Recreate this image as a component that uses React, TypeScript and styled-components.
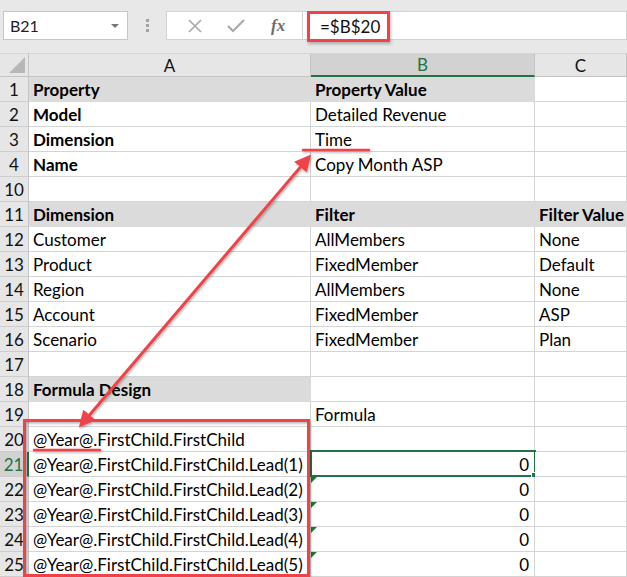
import * as React from 'react'
import styled, { createGlobalStyle } from 'styled-components'

const GRID = '#d4d4d4'
const BAND = '#dbdbdb'
const HEAD = '#e6e6e6'
const GREEN = '#217346'
const RED = '#ef4349'

const GlobalStyle = createGlobalStyle`
  body {
    margin: 0;
    background: #fff;
    font-family: Lato, "Open Sans", sans-serif;
  }
`

const Frame = styled.div`
  position: relative;
  width: 627px;
  height: 577px;
  overflow: hidden;
  background: #fff;
`

const FormulaBar = styled.div`
  height: 53px;
  box-sizing: border-box;
  padding-top: 11px;
  background: #e8e8e8;
  display: flex;
  align-items: flex-start;
`

const NameBox = styled.div`
  margin-left: 3px;
  width: 125px;
  height: 29px;
  box-sizing: border-box;
  background: #fff;
  border: 1px solid #c6c6c6;
  display: flex;
  align-items: center;
  justify-content: space-between;
  padding: 0 8px 0 6px;
  font-size: 16px;
  color: #222;
`

const Caret = styled.span`
  width: 0;
  height: 0;
  border-left: 4px solid transparent;
  border-right: 4px solid transparent;
  border-top: 4px solid #777;
`

const Grip = styled.div`
  width: 38px;
  height: 29px;
  display: flex;
  flex-direction: column;
  align-items: center;
  justify-content: center;
  gap: 2px;
`

const GripDot = styled.span`
  width: 3px;
  height: 3px;
  background: #a3a3a3;
`

const Buttons = styled.div`
  width: 136px;
  height: 29px;
  box-sizing: border-box;
  background: #fff;
  border: 1px solid #d2d2d2;
  border-right: none;
  display: flex;
  align-items: center;
  justify-content: space-around;
  padding: 0 4px 0 8px;
`

const Fx = styled.span`
  font-family: "Liberation Serif", serif;
  font-style: italic;
  font-weight: bold;
  font-size: 17px;
  color: #6e6e6e;
`

const FormulaInput = styled.div`
  flex: 1;
  height: 29px;
  box-sizing: border-box;
  background: #fff;
  border: 1px solid #d2d2d2;
  display: flex;
  align-items: center;
  padding-left: 4px;
`

const Highlight = styled.span`
  display: inline-flex;
  align-items: center;
  height: 31px;
  margin-top: 1px;
  box-sizing: border-box;
  border: 3px solid ${RED};
  box-shadow: 1px 2px 3px rgba(0, 0, 0, 0.25);
  padding: 0 7px 0 10px;
  font-size: 17px;
  color: #111;
`

const Sheet = styled.div`
  display: grid;
  grid-template-columns: 29px 282px 224px 92px;
  grid-auto-rows: 25px;
  grid-template-rows: 24px;
`

const Corner = styled.div`
  position: relative;
  background: ${HEAD};
  border-right: 1px solid #c4c4c4;
  border-bottom: 1px solid #c4c4c4;
  border-top: 1px solid #d6d6d6;
  box-sizing: border-box;
`

const CornerTriangle = styled.span`
  position: absolute;
  right: 3px;
  bottom: 3px;
  width: 0;
  height: 0;
  border-left: 16px solid transparent;
  border-bottom: 16px solid #b7b7b7;
`

const ColHead = styled.div<{ $active?: boolean }>`
  box-sizing: border-box;
  background: ${p => (p.$active ? '#d2d2d2' : HEAD)};
  border-top: 1px solid #d6d6d6;
  border-right: 1px solid #c4c4c4;
  border-bottom: ${p => (p.$active ? `2px solid ${GREEN}` : '1px solid #c4c4c4')};
  color: ${p => (p.$active ? GREEN : '#111')};
  font-size: 17px;
  display: flex;
  align-items: center;
  justify-content: center;
`

const RowHead = styled.div<{ $active?: boolean }>`
  box-sizing: border-box;
  background: ${p => (p.$active ? '#d2d2d2' : HEAD)};
  border-right: ${p => (p.$active ? `2px solid ${GREEN}` : '1px solid #c4c4c4')};
  border-bottom: 1px solid #cdcdcd;
  color: ${p => (p.$active ? GREEN : '#111')};
  font-size: 17px;
  display: flex;
  align-items: center;
  justify-content: center;
  padding-top: 1px;
`

const Cell = styled.div<{ $band?: boolean; $bold?: boolean; $right?: boolean }>`
  position: relative;
  box-sizing: border-box;
  background: ${p => (p.$band ? BAND : '#fff')};
  border-right: 1px solid ${p => (p.$band ? BAND : GRID)};
  border-bottom: 1px solid ${p => (p.$band ? BAND : GRID)};
  font-size: 17px;
  font-weight: ${p => (p.$bold ? 700 : 400)};
  color: #000;
  line-height: 24px;
  padding: 1px 5px 0 4px;
  white-space: nowrap;
  overflow: visible;
  text-align: ${p => (p.$right ? 'right' : 'left')};
`

const Selection = styled.span`
  position: absolute;
  left: -1px;
  top: -2px;
  right: -2px;
  bottom: -1px;
  border: 2px solid ${GREEN};
  pointer-events: none;
`

const FillHandle = styled.span`
  position: absolute;
  right: -4px;
  bottom: -4px;
  width: 5px;
  height: 5px;
  background: ${GREEN};
  border: 1px solid #fff;
`

const Flag = styled.span`
  position: absolute;
  left: 0;
  top: 0;
  width: 0;
  height: 0;
  border-top: 6px solid #1a7a26;
  border-right: 6px solid transparent;
`

const Overlay = styled.svg`
  position: absolute;
  left: 0;
  top: 0;
  pointer-events: none;
`

type Row = {
  n: number
  a?: string
  b?: string
  c?: string
  boldA?: boolean
  boldAll?: boolean
  band?: number
  selected?: boolean
  flag?: boolean
}

const rows: Row[] = [
  { n: 1, a: 'Property', b: 'Property Value', boldAll: true, band: 2 },
  { n: 2, a: 'Model', b: 'Detailed Revenue', boldA: true },
  { n: 3, a: 'Dimension', b: 'Time', boldA: true },
  { n: 4, a: 'Name', b: 'Copy Month ASP', boldA: true },
  { n: 10 },
  { n: 11, a: 'Dimension', b: 'Filter', c: 'Filter Value', boldAll: true, band: 3 },
  { n: 12, a: 'Customer', b: 'AllMembers', c: 'None' },
  { n: 13, a: 'Product', b: 'FixedMember', c: 'Default' },
  { n: 14, a: 'Region', b: 'AllMembers', c: 'None' },
  { n: 15, a: 'Account', b: 'FixedMember', c: 'ASP' },
  { n: 16, a: 'Scenario', b: 'FixedMember', c: 'Plan' },
  { n: 17 },
  { n: 18, a: 'Formula Design', boldAll: true, band: 1 },
  { n: 19, b: 'Formula' },
  { n: 20, a: '@Year@.FirstChild.FirstChild' },
  { n: 21, a: '@Year@.FirstChild.FirstChild.Lead(1)', b: '0', selected: true },
  { n: 22, a: '@Year@.FirstChild.FirstChild.Lead(2)', b: '0', flag: true },
  { n: 23, a: '@Year@.FirstChild.FirstChild.Lead(3)', b: '0', flag: true },
  { n: 24, a: '@Year@.FirstChild.FirstChild.Lead(4)', b: '0', flag: true },
  { n: 25, a: '@Year@.FirstChild.FirstChild.Lead(5)', b: '0', flag: true },
]

const Annotations: React.FC = () => (
  <Overlay width={627} height={577} viewBox="0 0 627 577">
    <defs>
      <filter id="shade" x="-10%" y="-10%" width="120%" height="120%">
        <feDropShadow dx="1" dy="1.5" stdDeviation="1.2" floodColor="#000" floodOpacity="0.3" />
      </filter>
      <marker id="head" viewBox="0 0 10 10" refX="8" refY="5" markerWidth="5.5" markerHeight="5.5" orient="auto-start-reverse">
        <path d="M0 0 L10 5 L0 10 z" fill={RED} />
      </marker>
    </defs>
    <g filter="url(#shade)" stroke={RED} fill="none" strokeWidth={3}>
      <line x1={81} y1={425} x2={309} y2={157} markerStart="url(#head)" markerEnd="url(#head)" />
      <rect x={24.5} y={420.5} width={284} height={155} />
      <line x1={303} y1={150} x2={369} y2={150} strokeWidth={2.5} strokeLinecap="round" />
      <line x1={34} y1={450} x2={100} y2={450} strokeWidth={2.5} strokeLinecap="round" />
    </g>
  </Overlay>
)

const App: React.FC = () => (
  <Frame>
    <GlobalStyle />
    <FormulaBar>
      <NameBox>
        B21
        <Caret />
      </NameBox>
      <Grip>
        <GripDot />
        <GripDot />
        <GripDot />
      </Grip>
      <Buttons>
        <svg width="14" height="14" viewBox="0 0 14 14">
          <path d="M1 1 L13 13 M13 1 L1 13" stroke="#a8a8a8" strokeWidth="1.6" />
        </svg>
        <svg width="18" height="14" viewBox="0 0 18 14">
          <path d="M1 7 L6 12 L17 1" stroke="#a8a8a8" strokeWidth="2" fill="none" />
        </svg>
        <Fx>fx</Fx>
      </Buttons>
      <FormulaInput>
        <Highlight>=$B$20</Highlight>
      </FormulaInput>
    </FormulaBar>
    <Sheet>
      <Corner>
        <CornerTriangle />
      </Corner>
      <ColHead>A</ColHead>
      <ColHead $active>B</ColHead>
      <ColHead>C</ColHead>
      {rows.map(r => {
        const band = r.band ?? 0
        return (
          <React.Fragment key={r.n}>
            <RowHead $active={r.selected}>{r.n}</RowHead>
            <Cell $band={band >= 1} $bold={r.boldA || r.boldAll}>
              {r.a}
            </Cell>
            <Cell $band={band >= 2} $bold={r.boldAll} $right={r.b === '0'}>
              {r.b}
              {r.flag && <Flag />}
              {r.selected && (
                <Selection>
                  <FillHandle />
                </Selection>
              )}
            </Cell>
            <Cell $band={band >= 3} $bold={r.boldAll}>
              {r.c}
            </Cell>
          </React.Fragment>
        )
      })}
    </Sheet>
    <Annotations />
  </Frame>
)

export default App
